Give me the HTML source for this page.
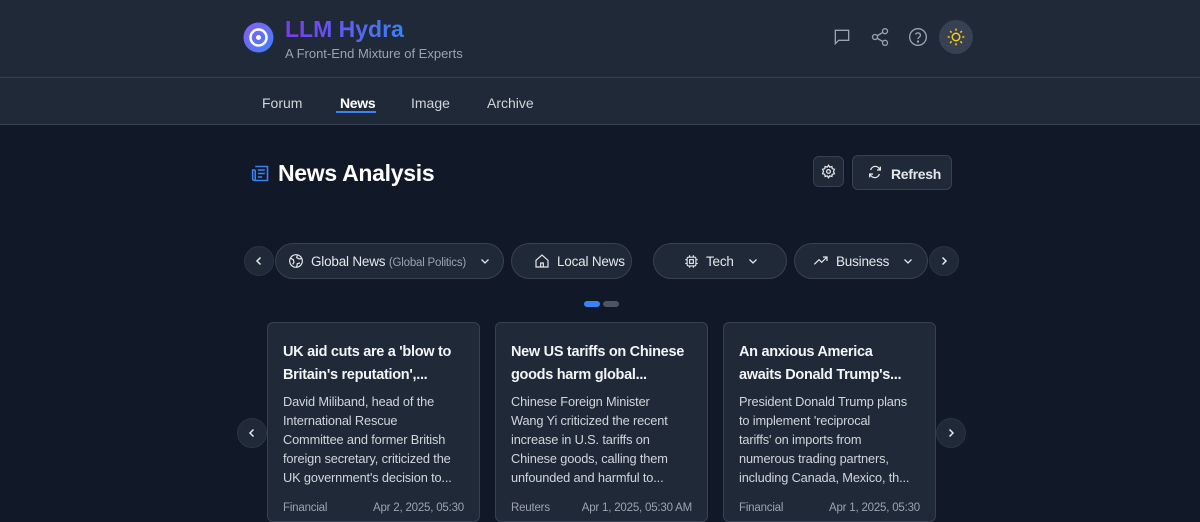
<!DOCTYPE html>
<html><head><meta charset="utf-8"><style>
*{box-sizing:border-box;margin:0;padding:0}
body{width:1200px;height:516px;overflow:hidden;background:#111827;font-family:"Liberation Sans",sans-serif;color:#e5e7eb;position:relative}
.hdr{position:absolute;left:0;top:0;width:1200px;height:78px;background:#1f2937;border-bottom:1px solid #374151}
.nav{position:absolute;left:0;top:78px;width:1200px;height:47px;background:#1f2937;border-bottom:1px solid #374151}
.a{position:absolute;white-space:nowrap}
.navi{position:absolute;top:95px;font-size:14px;color:#d1d5db}
.chip{position:absolute;top:243px;height:36px;border:1px solid #374151;background:#1f2937;border-radius:18px;font-size:13.5px;color:#e5e7eb;display:flex;align-items:center;padding-left:12px;gap:7px;white-space:nowrap;letter-spacing:-0.2px}
.circ{position:absolute;width:30px;height:30px;border-radius:50%;background:#1f2937;border:1px solid #2b3442;display:flex;align-items:center;justify-content:center}
.card{position:absolute;top:322px;width:213px;height:200px;background:#1f2937;border:1px solid #374151;border-radius:6px;padding:18px 10px 18px 15px;white-space:nowrap}
.card h3{font-size:14.5px;line-height:23px;color:#f3f4f6;font-weight:bold;margin-bottom:5px;letter-spacing:-0.3px}
.card p{font-size:12.8px;line-height:19px;color:#d1d5db;letter-spacing:-0.15px}
.meta{position:absolute;left:15px;right:15px;top:179px;font-size:11.5px;color:#9ca3af;display:flex;justify-content:space-between;letter-spacing:-0.2px}
svg{display:block}
</style></head><body>
<div class="hdr"></div><div class="nav"></div>
<svg class="a" style="left:243px;top:22px" width="31" height="31" viewBox="0 0 31 31"><defs><linearGradient id="g" x1="0" y1="0" x2="1" y2="1"><stop offset="0" stop-color="#8b5cf6"/><stop offset="1" stop-color="#3b82f6"/></linearGradient></defs><circle cx="15.5" cy="15.5" r="15" fill="url(#g)"/><circle cx="15.5" cy="15.5" r="8" fill="none" stroke="#fff" stroke-width="2.5"/><circle cx="15.5" cy="15.5" r="2.5" fill="#fff"/></svg>
<div class="a" style="left:285px;top:16px;font-size:23px;font-weight:bold;background:linear-gradient(90deg,#7c3aed,#3b82f6);-webkit-background-clip:text;color:transparent">LLM Hydra</div>
<div class="a" style="left:285px;top:46px;font-size:13px;color:#9ca3af">A Front-End Mixture of Experts</div>
<svg class="a" style="left:832px;top:27px" width="20" height="20" viewBox="0 0 24 24" fill="none" stroke="#9ca3af" stroke-width="1.6"><path d="M4 4h16v12H8l-4 4z"/></svg>
<svg class="a" style="left:870px;top:27px" width="20" height="20" viewBox="0 0 24 24" fill="none" stroke="#9ca3af" stroke-width="1.6"><circle cx="18" cy="5" r="3"/><circle cx="6" cy="12" r="3"/><circle cx="18" cy="19" r="3"/><path d="M8.6 13.5l6.8 4M15.4 6.5l-6.8 4"/></svg>
<svg class="a" style="left:908px;top:27px" width="20" height="20" viewBox="0 0 24 24" fill="none" stroke="#9ca3af" stroke-width="1.6"><circle cx="12" cy="12" r="10"/><path d="M9.1 9a3 3 0 015.8 1c0 2-3 2.5-3 4.5"/><circle cx="12" cy="17.5" r=".6" fill="#9ca3af"/></svg>
<div class="a" style="left:939px;top:20px;width:34px;height:34px;border-radius:50%;background:#374151"></div>
<svg class="a" style="left:946px;top:27px" width="20" height="20" viewBox="0 0 24 24" fill="none" stroke="#facc15" stroke-width="1.8"><circle cx="12" cy="12" r="4.5"/><path d="M12 2v2.5M12 19.5V22M2 12h2.5M19.5 12H22M4.9 4.9l1.8 1.8M17.3 17.3l1.8 1.8M4.9 19.1l1.8-1.8M17.3 6.7l1.8-1.8"/></svg>
<div class="navi" style="left:262px">Forum</div>
<div class="navi" style="left:340px;color:#fff;font-weight:bold;letter-spacing:-0.3px">News</div>
<div class="a" style="left:336px;top:111px;width:40px;height:2px;background:#3b82f6"></div>
<div class="navi" style="left:411px">Image</div>
<div class="navi" style="left:487px">Archive</div>
<svg class="a" style="left:250px;top:163px" width="21" height="21" viewBox="0 0 24 24" fill="none" stroke="#3b82f6" stroke-width="1.8"><path d="M6 4h14v16H5a2 2 0 01-2-2V8h3"/><path d="M6 8v12M9 8h8M9 12h8M9 16h5"/></svg>
<div class="a" style="left:278px;top:160px;font-size:23px;font-weight:bold;color:#fff;letter-spacing:-0.3px">News Analysis</div>
<div class="a" style="left:813px;top:156px;width:31px;height:31px;border:1px solid #374151;background:#1f2937;border-radius:6px"></div>
<svg class="a" style="left:821px;top:164px" width="15" height="15" viewBox="0 0 24 24" fill="none" stroke="#e5e7eb" stroke-width="2"><circle cx="12" cy="12" r="3"/><path d="M12 2l2 3 3.5-1 .5 3.5 3.5 1-1.5 3.5 1.5 3.5-3.5 1-.5 3.5-3.5-1-2 3-2-3-3.5 1-.5-3.5-3.5-1L4 12 2.5 8.5l3.5-1L6.5 4 10 5z"/></svg>
<div class="a" style="left:852px;top:155px;width:100px;height:35px;border:1px solid #374151;background:#1f2937;border-radius:6px;font-size:14px;font-weight:bold;color:#e5e7eb;padding:10px 0 0 38px;letter-spacing:-0.3px">Refresh</div>
<svg class="a" style="left:867px;top:164px" width="16" height="16" viewBox="0 0 24 24" fill="none" stroke="#e5e7eb" stroke-width="2"><path d="M20 4v5h-5M4 20v-5h5"/><path d="M5.5 9A7 7 0 0119 8.5M18.5 15A7 7 0 015 15.5"/></svg>
<div class="circ" style="left:244px;top:246px"><svg width="12" height="12" viewBox="0 0 24 24" fill="none" stroke="#e5e7eb" stroke-width="3"><path d="M15 5l-7 7 7 7"/></svg></div>
<div class="chip" style="left:275px;width:229px"><svg width="16" height="16" viewBox="0 0 24 24" fill="none" stroke="#e5e7eb" stroke-width="1.8"><circle cx="12" cy="12" r="9.5"/><path d="M4 8l4 2 1 4-2 3M14 3l-1 4 4 2 4-1M13 21l1-5 4-1"/></svg><span>Global News <span style="color:#9ca3af;font-size:11.5px">(Global Politics)</span></span><svg style="margin-left:6px" width="12" height="12" viewBox="0 0 24 24" fill="none" stroke="#e5e7eb" stroke-width="2.5"><path d="M5 9l7 7 7-7"/></svg></div>
<div class="chip" style="left:511px;width:121px;padding-left:22px"><svg width="16" height="16" viewBox="0 0 24 24" fill="none" stroke="#e5e7eb" stroke-width="1.8"><path d="M3 11l9-8 9 8v10H3z M10 21v-6h4v6"/></svg>Local News</div>
<div class="chip" style="left:653px;width:134px;padding-left:30px"><svg width="15" height="15" viewBox="0 0 24 24" fill="none" stroke="#e5e7eb" stroke-width="1.8"><rect x="5" y="5" width="14" height="14" rx="2"/><rect x="9" y="9" width="6" height="6"/><path d="M9 2v3M15 2v3M9 19v3M15 19v3M2 9h3M2 15h3M19 9h3M19 15h3"/></svg>Tech<svg style="margin-left:6px" width="12" height="12" viewBox="0 0 24 24" fill="none" stroke="#e5e7eb" stroke-width="2.5"><path d="M5 9l7 7 7-7"/></svg></div>
<div class="chip" style="left:794px;width:134px;padding-left:18px"><svg width="16" height="16" viewBox="0 0 24 24" fill="none" stroke="#e5e7eb" stroke-width="1.8"><path d="M2 17l7-7 4 4 8-8M15 6h6v6"/></svg>Business<svg style="margin-left:6px" width="12" height="12" viewBox="0 0 24 24" fill="none" stroke="#e5e7eb" stroke-width="2.5"><path d="M5 9l7 7 7-7"/></svg></div>
<div class="circ" style="left:929px;top:246px"><svg width="12" height="12" viewBox="0 0 24 24" fill="none" stroke="#e5e7eb" stroke-width="3"><path d="M9 5l7 7-7 7"/></svg></div>
<div class="a" style="left:584px;top:301px;width:16px;height:6px;border-radius:3px;background:#3b82f6"></div>
<div class="a" style="left:603px;top:301px;width:16px;height:6px;border-radius:3px;background:#4b5563"></div>
<div class="card" style="left:267px"><h3>UK aid cuts are a 'blow to<br>Britain's reputation',...</h3><p>David Miliband, head of the<br>International Rescue<br>Committee and former British<br>foreign secretary, criticized the<br>UK government's decision to...</p><div class="meta"><span>Financial</span><span>Apr 2, 2025, 05:30</span></div></div>
<div class="card" style="left:495px"><h3>New US tariffs on Chinese<br>goods harm global...</h3><p>Chinese Foreign Minister<br>Wang Yi criticized the recent<br>increase in U.S. tariffs on<br>Chinese goods, calling them<br>unfounded and harmful to...</p><div class="meta"><span>Reuters</span><span>Apr 1, 2025, 05:30 AM</span></div></div>
<div class="card" style="left:723px"><h3>An anxious America<br>awaits Donald Trump's...</h3><p>President Donald Trump plans<br>to implement 'reciprocal<br>tariffs' on imports from<br>numerous trading partners,<br>including Canada, Mexico, th...</p><div class="meta"><span>Financial</span><span>Apr 1, 2025, 05:30</span></div></div>
<div class="circ" style="left:237px;top:418px"><svg width="12" height="12" viewBox="0 0 24 24" fill="none" stroke="#e5e7eb" stroke-width="3"><path d="M15 5l-7 7 7 7"/></svg></div>
<div class="circ" style="left:936px;top:418px"><svg width="12" height="12" viewBox="0 0 24 24" fill="none" stroke="#e5e7eb" stroke-width="3"><path d="M9 5l7 7-7 7"/></svg></div>
</body></html>
